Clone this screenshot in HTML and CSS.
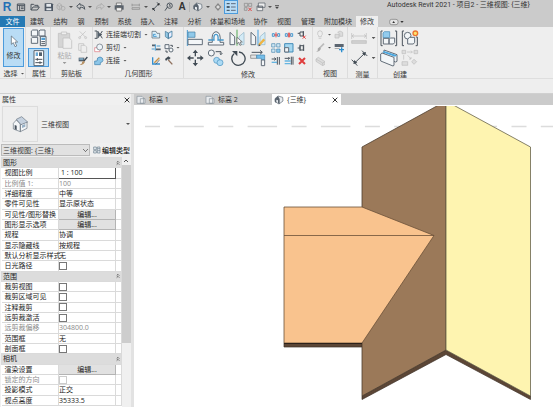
FILE: index.html
```html
<!DOCTYPE html>
<html lang="zh-CN">
<head>
<meta charset="utf-8">
<title>Autodesk Revit 2021</title>
<link rel="stylesheet" href="styles.css">
</head>
<body>
<header class="titlebar">
  <div class="quick">
    <button class="logo" aria-label="Revit">R</button>
    <button aria-label="主页"><svg class="i10" viewBox="45 5 30 30"><path class="dk" d="M49 11h22v20H49zM49 15h22M56 15v16M60 20h8M60 25h8"/></svg></button>
    <button aria-label="打开"><svg class="i10" viewBox="90 5 30 30"><path class="dk" d="M93 29V12h8l3 3h10v5M93 29l6-9h19l-6 9z"/></svg></button>
    <button aria-label="保存"><svg class="i10" viewBox="130 5 30 30"><path fill="#4e5865" d="M132 9h22l3 3v20h-25z"/><path fill="#e4e8ec" d="M137 11h14v8h-14zM137 24h15v6h-15z"/></svg></button>
    <button aria-label="同步"><svg class="i10" viewBox="167 5 30 30"><path class="lt" fill="#c2c2c2" d="M170 14l7-5 7 5v10l-7 5-7-5zM170 14l7 4 7-4M177 18v11"/><circle class="lt" cx="188" cy="24" r="6" fill="#ccc"/></svg></button>
    <i class="dot"></i>
    <button aria-label="放弃"><svg class="i10" viewBox="227 5 30 30"><path class="dk" fill="#eee" d="M229 18l10-9v5h6q9 2 8 13q-3-6-9-6h-5v6z"/></svg></button>
    <i class="dot"></i>
    <button aria-label="重做"><svg class="i10" viewBox="285 5 30 30"><path class="lt" d="M313 18l-10-9v5h-6q-9 2-8 13q3-6 9-6h5v6z"/></svg></button>
    <i class="dot"></i>
    <button aria-label="打印"><svg class="i10" viewBox="342 5 30 30"><path fill="#eee" stroke="#555" stroke-width="2" d="M349 8h16v8h-16z"/><path fill="#59626c" d="M344 15h27v13h-27z"/><path fill="#f4f4f4" stroke="#555" stroke-width="2" d="M349 22h16v10h-16z"/></svg></button>
    <i></i>
    <button aria-label="测量"><svg class="i10" viewBox="393 5 30 30"><path class="md" d="M396 14h22M396 10v8M418 10v8M396 22h23v5h-23z"/></svg></button>
    <i class="dot"></i>
    <button aria-label="对齐尺寸标注"><svg class="i10" viewBox="451 5 30 30"><path class="dk" d="M457 28l18-18M454 23l9 9M469 6l9 9"/><path fill="#333" d="M455 30l3-8 5 5zM477 8l-3 8-5-5z"/></svg></button>
    <button aria-label="标记"><svg class="i10" viewBox="490 5 30 30"><path class="dk" d="M493 31l8-12"/><circle class="dk" cx="507" cy="16" r="8" fill="#ddd"/><path class="dk" d="M505 13h3v7"/></svg></button>
    <button class="letter" aria-label="文字">A</button>
    <i class="bar"></i>
    <button aria-label="三维视图"><svg class="i10" viewBox="25 5 30 30"><path fill="#e9edf1" stroke="#59636e" stroke-width="2" d="M27 16l9-8 15 4 1 11-12 9-13-7z"/><path fill="#59636e" d="M27 16l9-8 6 9v15l-5-2v-9l-6-2v9l-4-2z"/></svg></button>
    <i class="dot"></i>
    <button aria-label="剖面"><svg class="i10" viewBox="82 5 30 30"><path fill="#888" d="M87 20l10-12 10 12-10 12z"/><circle cx="97" cy="20" r="6" fill="#ddd" stroke="#777" stroke-width="2"/></svg></button>
    <button class="on" aria-label="细线"><svg class="i10" viewBox="122 5 30 30"><path stroke="#354553" stroke-width="3" d="M124 10h9M124 30h9"/><path stroke="#354553" stroke-width="5" d="M124 20h9"/><path stroke="#334" stroke-width="2" d="M137 10h14M137 20h14M137 30h14"/></svg></button>
    <i></i>
    <button aria-label="关闭非活动视图"><svg class="i10" viewBox="173 5 30 30"><path class="md" d="M177 9h10v9h-10zM190 9h9v9h-9zM177 22h8v8h-8z"/><path class="rd" d="M189 22l10 10M199 22l-10 10"/></svg></button>
    <button aria-label="切换窗口"><svg class="i10" viewBox="212 5 30 30"><path fill="#eee" stroke="#4b545d" stroke-width="2" d="M219 8h20v13h-20zM215 17h17v14h-17zM215 20h17"/></svg></button>
    <i class="dot"></i>
    <button aria-label="自定义"><svg class="i6" viewBox="0 0 18 18"><path fill="#444" d="M3 4h12v2H3zM3 8h12l-6 7z"/></svg></button>
  </div>
  <h1>Autodesk Revit 2021 - 项目2 - 三维视图: {三维}</h1>
</header>

<nav class="tabs">
  <a class="file" href="#">文件</a><a href="#">建筑</a><a href="#">结构</a><a href="#">钢</a><a href="#">预制</a><a href="#">系统</a><a href="#">插入</a><a href="#">注释</a><a href="#">分析</a><a href="#">体量和场地</a><a href="#">协作</a><a href="#">视图</a><a href="#">管理</a><a href="#">附加模块</a><a class="current" href="#">修改</a>
  <button aria-label="最小化功能区"><svg width="16" height="8" viewBox="65 53 48 24"><rect x="67" y="57" width="25" height="16" rx="6" fill="#e4e4e4" stroke="#777" stroke-width="2"/><path fill="#333" d="M75 68l4-6 4 6zM99 62h10l-5 6z"/></svg></button>
</nav>

<section class="ribbon">
  <div class="group select">
    <div class="body"><button class="modify"><svg class="i12" viewBox="22 94 36 36"><path fill="#fff" stroke="#53606c" stroke-width="2" d="M32 97v25l6-5 5 12 5-2-5-12h8z"/></svg>修改</button></div>
    <p>选择 <i class="dot"></i></p>
  </div>
  <div class="group props">
    <div class="body two">
      <button aria-label="类型属性"><svg class="i18" viewBox="88 86 54 54"><path class="bx" d="M92 92l4-3h15v18H92zM115 92l3-3h15v18h-18zM92 114l3-3h16v18H92z"/><path fill="#fff" stroke="#53606c" stroke-width="3" d="M119 108h17v28h-17z"/><path fill="#53a0d5" d="M122 112h11v7h-11z"/><path class="dk" d="M122 124h11M122 130h11"/></svg></button>
      <button class="on" aria-label="属性"><svg class="i18" viewBox="87 144 54 54"><path fill="#fff" stroke="#53606c" stroke-width="3" d="M99 149h29v45H99z"/><path fill="#68a9d6" d="M104 154h7v11h-7z"/><path fill="#53606c" d="M114 154h9v11h-9z"/><path class="dk" d="M103 175h21M103 185h21M109 171v8M117 181v8"/></svg></button>
    </div>
    <p>属性</p>
  </div>
  <div class="group clip">
    <div class="body">
      <button class="paste"><svg class="i18" viewBox="168 85 54 54"><path fill="#d5d5d5" stroke="#bbb" stroke-width="2" d="M175 92h34v42h-34z"/><path fill="#eee" stroke="#bbb" stroke-width="2" d="M184 88h16v8h-16zM189 106h19l7 7v24h-26z"/></svg>粘贴<i class="dot"></i></button>
      <div class="three">
        <button aria-label="剪切"><svg class="i10" viewBox="237 90 30 30"><path class="gy" d="M242 94l18 18M260 94l-18 18"/><circle class="gy" cx="242" cy="113" r="3"/><circle class="gy" cx="260" cy="113" r="3"/></svg></button>
        <button aria-label="复制"><svg class="i10" viewBox="237 129 30 30"><path class="gy" d="M246 151h-7v-20h15v5M246 136h12l5 5v16h-17z"/></svg></button>
        <button aria-label="匹配类型"><svg class="i10" viewBox="236 169 30 30"><path fill="#53606c" d="M238 174h17v11h-17z"/><path fill="#8cc0e0" d="M240 176h12v4h-12z"/><path stroke="#374450" stroke-width="4" d="M264 172l-11 13"/><path fill="#b79164" d="M253 183l4 4q-6 12-16 8 8-1 7-8z"/></svg></button>
      </div>
    </div>
    <p>剪贴板</p>
  </div>
  <div class="group geom">
    <div class="body">
      <div class="three wide">
        <button><svg class="i10" viewBox="285 89 30 30"><path class="dk" d="M287 92h7v22h-7M296 92l14 22M310 92l-14 22M309 103h-9"/><path fill="#53606c" d="M296 94l8 9-8 9z"/></svg>连接端切割<i class="dot"></i></button>
        <button><svg class="i10" viewBox="285 129 30 30"><path fill="#fff" stroke="#df7780" stroke-width="2" d="M287 143h16v12h-16z"/><circle cx="302" cy="141" r="9" fill="#edf4f9" stroke="#5e6872" stroke-width="2"/></svg>剪切<i class="dot"></i></button>
        <button><svg class="i10" viewBox="285 169 30 30"><path fill="#8dc6e8" stroke="#3b7eac" stroke-width="2" d="M287 184h7q-1-12 9-12 9 1 9 10-1 6-8 7v6h-17z"/></svg>连接<i class="dot"></i></button>
      </div>
      <div class="three">
        <button aria-label="连接屋顶"><svg class="i10" viewBox="451 89 30 30"><path fill="#d9eef9" stroke="#53606c" stroke-width="2" d="M454 93h12l3 6h8v14h-23z"/><path class="bl" d="M465 102h-7v6h10"/></svg></button>
        <button aria-label="梁连接"><svg class="i10" viewBox="451 129 30 30"><path stroke="#53606c" stroke-width="5" d="M454 136h10M466 148h14"/><path class="bl" d="M464 133v19M468 138h11M453 147h9"/></svg></button>
        <button aria-label="拆分面"><svg class="i10" viewBox="451 169 30 30"><path stroke="#368fce" stroke-width="4" fill="none" d="M456 173v20h22"/><path stroke="#c89245" stroke-width="4" d="M461 189l15-15"/><path stroke="#374450" stroke-width="2" d="M465 194l12-14"/></svg></button>
      </div>
      <div class="three last">
        <button aria-label="墙连接"><svg class="i10" viewBox="492 89 30 30"><path fill="#94cae8" stroke="#447392" stroke-width="2" d="M496 93l9 5v17l-9-6zM505 98l11-6v17l-11 6z"/><path fill="#eef" d="M507 100l7-4v10l-7 5z"/></svg></button>
        <button aria-label="连接几何图形"><svg class="i10" viewBox="492 129 30 30"><path class="bx" d="M495 134h12v12h-12z"/><circle class="bx" cx="513" cy="150" r="6"/><path class="dk" d="M511 136h6v5M498 151v5h6"/></svg><i class="dot"></i></button>
        <button aria-label="拆除"><svg class="i10" viewBox="492 169 30 30"><path stroke="#8f715e" stroke-width="4" d="M505 181l12 13"/><path fill="#414b54" d="M495 178l10-8 7 5-5 5-4-1-5 5z"/></svg></button>
      </div>
    </div>
    <p>几何图形</p>
  </div>
  <div class="group edit">
    <div class="body">
      <div class="large">
        <button aria-label="对齐"><svg class="i18" viewBox="4 86 54 54"><path class="bl" d="M8 89v48"/><path fill="#8fc9ea" stroke="#447da2" stroke-width="2" d="M10 95h21v16H10z"/><path class="bx" d="M10 117h43v16H10z"/></svg></button>
        <button aria-label="偏移"><svg class="i18" viewBox="68 86 54 54"><path class="bx" d="M72 134v-8h12q-4-30 11-32 16 2 12 32h11v8z"/><path fill="none" stroke="#4799cc" stroke-width="4" d="M72 119h17q-2-17 6-17t6 17h17"/></svg></button>
        <button aria-label="镜像-拾取轴"><svg class="i18" viewBox="132 86 54 54"><path class="bx" d="M138 96l14 13v24h-14z"/><path fill="#d4ebf6" stroke="#8fb4c6" stroke-width="2" d="M180 96l-15 13v24h15z"/><path stroke="#52a957" stroke-width="3" d="M159 88v48"/><path fill="#fff" stroke="#555" stroke-width="2" d="M159 111v19l5-4 4 9 4-2-4-8h7z"/></svg></button>
        <button aria-label="镜像-绘制轴"><svg class="i18" viewBox="196 86 54 54"><path class="bx" d="M202 96l14 13v24h-14z"/><path fill="#d4ebf6" stroke="#8fb4c6" stroke-width="2" d="M244 96l-15 13v24h15z"/><path stroke="#419dde" stroke-width="3" d="M223 88v48"/><path stroke="#efb443" stroke-width="7" d="M226 134l16-17"/><path fill="#555" d="M224 138l2-7 5 5z"/></svg></button>
        <button aria-label="移动"><svg class="i18" viewBox="4 145 54 54"><path stroke="#414b54" stroke-width="4" d="M15 172h34M32 155v34"/><path fill="#414b54" d="M32 147l8 10H24zM32 197l8-10H24zM7 172l10-8v16zM57 172l-10-8v16z"/><path fill="#eee" d="M27 167h10v10H27z"/></svg></button>
        <button aria-label="复制"><svg class="i18" viewBox="68 145 54 54"><circle class="bx" cx="81" cy="157" r="9"/><path class="dk" d="M94 153h16v8M106 158l4 4 4-4"/><circle cx="97" cy="179" r="9" fill="#acdaf4" stroke="#438ebd" stroke-width="2"/><circle cx="107" cy="186" r="9" fill="#acdaf4" stroke="#438ebd" stroke-width="2"/></svg></button>
        <button aria-label="旋转"><svg class="i18" viewBox="132 145 54 54"><path fill="none" stroke="#414b54" stroke-width="4" d="M150 159a20 20 0 1 0 15-5"/><path fill="#414b54" d="M144 151h16v16z"/></svg></button>
        <button aria-label="修剪"><svg class="i18" viewBox="196 145 54 54"><path class="dk" d="M204 155h31M229 149l7 6-7 6"/><path fill="#e5e5e5" stroke="#777" stroke-width="2" d="M201 163h18v10h-18z"/><path fill="#75bee9" stroke="#4185b4" stroke-width="2" d="M219 163h24v15h-10v-5h-14z"/><path class="bx" d="M233 178h10v17h-10z"/></svg></button>
      </div>
      <div class="nine">
        <button aria-label="拆分图元"><svg class="i10" viewBox="264 89 30 30"><path class="bl" d="M268 100h6v8h-6zM284 100h6v8h-6z"/><path class="rd" d="M279 96v15M274 104h10"/></svg></button>
        <button aria-label="用间隙拆分"><svg class="i10" viewBox="304 89 30 30"><path class="bl" d="M308 100h6v8h-6zM324 100h6v8h-6z"/><path class="rd" d="M317 97v14M321 97v14"/></svg></button>
        <button aria-label="解锁"><svg class="i10" viewBox="345 89 30 30"><path class="dk" d="M347 99h7v-4h10v12h-10v-8M364 92v17"/><path class="rd" d="M362 106l9 9M371 106l-9 9"/></svg></button>
        <button aria-label="阵列"><svg class="i10" viewBox="265 129 30 30"><path fill="#cfe8f5" stroke="#4a88af" stroke-width="2" d="M267 131h10v10h-10zM282 131h10v10h-10zM267 147h10v10h-10z"/><path fill="#8cc9eb" stroke="#4689b5" stroke-width="2" d="M282 147h10v10h-10z"/></svg></button>
        <button aria-label="缩放"><svg class="i10" viewBox="305 129 30 30"><path fill="#a5d7f0" stroke="#438bb7" stroke-width="3" d="M307 131h25v25h-25z"/><path class="bx" d="M307 143h12v13h-12z"/></svg></button>
        <button aria-label="锁定"><svg class="i10" viewBox="345 129 30 30"><path class="dk" d="M347 144h7M354 137h10v13h-10zM365 134v19M354 134v19"/></svg></button>
        <button aria-label="修剪单个"><svg class="i10" viewBox="265 169 30 30"><path class="dk" d="M267 178h12M275 174l5 4-5 4M284 172v23M290 172v23"/><path stroke="#65b5e1" stroke-width="4" d="M267 188h16"/></svg></button>
        <button aria-label="修剪多个"><svg class="i10" viewBox="305 169 30 30"><path class="dk" d="M307 176h14M318 172l4 4-4 4M327 171v24M332 171v24"/><path stroke="#65b5e1" stroke-width="4" d="M307 184h18M307 192h18"/></svg></button>
        <button aria-label="删除"><svg class="i10" viewBox="345 169 30 30"><path stroke="#df3d3d" stroke-width="6" d="M351 175l18 18M369 175l-18 18"/></svg></button>
      </div>
    </div>
    <p>修改</p>
  </div>
  <div class="group view">
    <div class="body">
      <button aria-label="隐藏"><svg class="i10" viewBox="392 89 30 30"><path class="gy" d="M403 109q0-5-3-7-2-10 7-11 9 1 7 11-3 2-3 7zM403 114h8"/></svg></button><i class="dot"></i>
      <button aria-label="替换"><svg class="i10" viewBox="450 89 30 30"><path fill="#ddd" stroke="#bcbcbc" stroke-width="2" d="M453 102h12v11h-12zM461 96l7-4 8 4v12h-9v-8z"/></svg></button>
      <button aria-label="线处理"><svg class="i10" viewBox="392 129 30 30"><path stroke="#bbb" stroke-width="5" d="M419 131l-13 13"/><path fill="#a9a9a9" d="M405 141l5 5q-5 11-15 9 7-2 5-9z"/></svg></button><i class="dot"></i>
      <button aria-label="线样式"><svg class="i10" viewBox="450 129 30 30"><path fill="#5b6570" d="M452 132h27v9h-27z"/><path fill="#aaa" d="M452 144h15v3h-15z"/><path stroke="#2d8ecf" stroke-width="4" d="M473 142v15M465 149h15"/></svg></button>
      <button aria-label="选择框"><svg class="i10" viewBox="392 169 30 30"><path fill="#ddd" stroke="#bcbcbc" stroke-width="2" d="M395 178l7-5 20 13v8l-7 4-20-13zM395 178l20 12v8M415 190l7-4"/></svg></button>
    </div>
    <p>视图</p>
  </div>
  <div class="group measure">
    <div class="body">
      <button aria-label="测量"><svg class="i18" viewBox="496 86 54 54"><path class="gy" d="M501 98v18M545 98v18M502 107h42M508 102l-6 5 6 5M538 102l6 5-6 5"/><path fill="#d2d2d2" stroke="#bbb" stroke-width="2" d="M501 121h44v8h-44z"/></svg></button><i class="dot"></i>
      <button aria-label="对齐标注"><svg class="i18" viewBox="496 145 54 54"><path class="dk" d="M510 187l30-29M501 177l17 18M532 150l16 16"/><path fill="#414b54" d="M506 190l3-12 9 9zM544 154l-3 12-9-9z"/></svg></button><i class="dot"></i>
    </div>
    <p>测量</p>
  </div>
  <div class="group create">
    <div class="body">
      <button aria-label="创建部件"><svg class="i18" viewBox="40 86 54 54"><path class="dk" d="M48 92h-5v44h5M85 92h5v44h-5"/><path fill="#93ccee" stroke="#3f86b3" stroke-width="2" d="M49 98l4-4h16v18H49z"/><path class="bx" d="M50 114h17v17H50zM67 117l5-4h12v14l-4 4H67z"/></svg></button>
      <button aria-label="创建组"><svg class="i18" viewBox="101 86 54 54"><path class="dk" d="M110 92h-5v44h5M146 110h4v26h-5"/><circle class="bx" cx="121" cy="106" r="10"/><path class="bx" d="M121 116l6-5h15v15l-4 5h-17z"/><circle cx="144" cy="99" r="7" fill="#ffe36b" stroke="#eb7532" stroke-width="4"/></svg></button>
      <button aria-label="创建零件"><svg class="i18" viewBox="39 145 54 54"><path class="bx" d="M51 148l39 14v20l-4 2-35-14z"/><path fill="#4ba7df" d="M46 155l38 13 6-4-39-13z"/><path class="bx" d="M41 160l4-3 36 13v24l-3 2-37-15z"/></svg></button>
      <button aria-label="创建组合"><svg class="i18" viewBox="101 145 54 54"><path fill="#ddd" stroke="#bcbcbc" stroke-width="2" d="M104 149h11v10h-11zM140 149h11v10h-11zM104 183h17v11h-17zM140 176l8 7-8 8-7-8z"/><path class="gy" d="M119 154h16M131 150l4 4-4 4M109 163v14M121 164l10 11v-6M131 175h-6"/></svg></button>
    </div>
    <p>创建</p>
  </div>
</section>

<main class="work">
  <aside class="panel">
    <div class="panel-head"><h2>属性</h2><button aria-label="关闭"><svg class="i6" viewBox="0 0 18 18"><path stroke="#333" stroke-width="3" d="M2 2l14 14M16 2L2 16"/></svg></button></div>
    <button class="type">
      <span class="thumb"><svg class="i18" viewBox="33 80 54 54"><path fill="#f3f5f7" stroke="#67727e" stroke-width="2" d="M40 105l9-10 12 12v23l-21-8zM61 108l20-8v20l-20 10z"/><path fill="#c5d1df" stroke="#67727e" stroke-width="2" d="M49 93l16-8 18 16-20 8z"/><path fill="#46515d" d="M44 110l6 2v13l-6-2z"/><path fill="#97b0c6" d="M66 111l10-4v8l-10 4z"/></svg></span>
      <span>三维视图</span><i class="dot"></i>
    </button>
    <div class="instance">
      <select aria-label="视图实例"><option>三维视图: {三维}</option></select>
      <button><svg class="i8" viewBox="0 0 24 24"><path fill="#e8eef3" stroke="#687b8b" stroke-width="2" d="M2 3h8v8H2zM13 3h8v18h-8zM2 14h8v7H2zM14 8h7M14 14h7"/></svg>编辑类型</button>
    </div>
    <div class="list">
      <table>
        <colgroup><col class="c-name"><col><col class="c-end"></colgroup>
        <tbody>
        <tr><th colspan="3"><div>图形<svg class="i6" viewBox="0 0 18 18"><path class="fold" d="M5 8l4-4 4 4M5 14l4-4 4 4"/></svg></div></th></tr>
        <tr><td><label for="scale">视图比例</label></td><td class="framed"><input id="scale" type="text" value="1 : 100"></td><td></td></tr>
        <tr class="off"><td>比例值 1:</td><td>100</td><td></td></tr>
        <tr><td>详细程度</td><td>中等</td><td></td></tr>
        <tr><td>零件可见性</td><td>显示原状态</td><td></td></tr>
        <tr><td>可见性/图形替换</td><td class="act"><button>编辑...</button></td><td></td></tr>
        <tr><td>图形显示选项</td><td class="act"><button>编辑...</button></td><td></td></tr>
        <tr><td>规程</td><td>协调</td><td></td></tr>
        <tr><td>显示隐藏线</td><td>按规程</td><td></td></tr>
        <tr><td>默认分析显示样式</td><td>无</td><td></td></tr>
        <tr><td><label for="sun">日光路径</label></td><td><input id="sun" type="checkbox"></td><td></td></tr>
        <tr><th colspan="3"><div>范围<svg class="i6" viewBox="0 0 18 18"><path class="fold" d="M5 8l4-4 4 4M5 14l4-4 4 4"/></svg></div></th></tr>
        <tr><td><label for="crop">裁剪视图</label></td><td><input id="crop" type="checkbox"></td><td></td></tr>
        <tr><td><label for="cropv">裁剪区域可见</label></td><td><input id="cropv" type="checkbox"></td><td></td></tr>
        <tr><td><label for="anno">注释裁剪</label></td><td><input id="anno" type="checkbox"></td><td></td></tr>
        <tr><td><label for="far">远剪裁激活</label></td><td><input id="far" type="checkbox"></td><td></td></tr>
        <tr class="off"><td>远剪裁偏移</td><td>304800.0</td><td></td></tr>
        <tr><td>范围框</td><td>无</td><td></td></tr>
        <tr><td><label for="sect">剖面框</label></td><td><input id="sect" type="checkbox"></td><td></td></tr>
        <tr><th colspan="3"><div>相机<svg class="i6" viewBox="0 0 18 18"><path class="fold" d="M5 8l4-4 4 4M5 14l4-4 4 4"/></svg></div></th></tr>
        <tr><td>渲染设置</td><td class="act"><button>编辑...</button></td><td></td></tr>
        <tr class="off"><td><label for="lock">锁定的方向</label></td><td><input id="lock" type="checkbox" disabled></td><td></td></tr>
        <tr><td>投影模式</td><td>正交</td><td></td></tr>
        <tr><td>视点高度</td><td>35333.5</td><td></td></tr>
        </tbody>
      </table>
      <div class="scroll"><svg class="i8" viewBox="0 0 24 24"><path fill="none" stroke="#555" stroke-width="3" d="M6 15l6-6 6 6"/></svg><div class="grip"></div></div>
    </div>
  </aside>

  <section class="stage">
    <nav class="docs">
      <a href="#"><svg class="i10" viewBox="16 20 30 30"><path fill="#e8ebee" stroke="#88929c" stroke-width="2" d="M19 24h15l5 5v16H19zM29 31h14v14H29z"/></svg>标高 1</a>
      <a href="#"><svg class="i10" viewBox="16 20 30 30"><path fill="#e8ebee" stroke="#88929c" stroke-width="2" d="M19 24h15l5 5v16H19zM29 31h14v14H29z"/></svg>标高 2</a>
      <a class="current" href="#"><svg class="i10" viewBox="25 5 30 30"><path fill="#e9edf1" stroke="#59636e" stroke-width="2" d="M28 16l9-8 14 4 1 11-12 9-12-7z"/><path fill="#59636e" d="M28 16l9-8 5 9v15l-5-2v-9l-5-2v9l-4-2z"/></svg>{三维}<svg class="i6 x" viewBox="0 0 18 18"><path stroke="#333" stroke-width="3" d="M2 2l14 14M16 2L2 16"/></svg></a>
    </nav>
    <svg class="model" viewBox="134 105 419 302" role="img" aria-label="三维模型">
      <path stroke="#dcdcdc" stroke-width="1.500" stroke-dasharray="15 14.3 29.5 14.5" d="M145 126.500H553"/>
      <path fill="#5c4636" stroke="#3d3027" stroke-width=".7" d="M362 396l84-46 84.500 46v3.500L446 354.500 362 399.500zM284 343h78v4h-78z"/>
      <path fill="#9b7959" stroke="#4d3d2f" stroke-width=".8" d="M362 147l84-46v249l-84 46z"/>
      <path fill="#fef4b0" stroke="#67624a" stroke-width=".8" d="M446 101l84.500 46v249L446 350z"/>
      <path fill="#f9c38e" stroke="#6b5038" stroke-width=".8" d="M284 207h78l72 28.500L362 343h-78zM284 235.500h150"/>
      <path stroke="#2c211a" d="M284 343.500h78"/>
      <path fill="#fff" d="M134 105h419v1H134z"/>
    </svg>
  </section>
</main>
</body>
</html>
```
FILE: styles.css
```css
* { box-sizing: border-box; }

body {
  margin: 0;
  min-height: 100vh;
  display: flex;
  flex-direction: column;
  background: #eee;
  color: #333;
  font: 7px/9px "Open Sans", "Noto Sans CJK SC", sans-serif;
}

h1, h2, p { margin: 0; font: inherit; }
a { color: inherit; text-decoration: none; }

button {
  margin: 0;
  padding: 0;
  border: 0;
  background: none;
  color: inherit;
  font: inherit;
  display: flex;
  align-items: center;
  justify-content: center;
}

svg { display: block; flex: none; }
.i6 { width: 6px; height: 6px; }
.i8 { width: 8px; height: 8px; }
.i10 { width: 10px; height: 10px; }
.i12 { width: 12px; height: 12px; }
.i18 { width: 18px; height: 18px; }

.dk { fill: none; stroke: #4b545d; stroke-width: 3; }
.md { fill: none; stroke: #858585; stroke-width: 2; }
.lt { stroke: #a4a4a4; stroke-width: 2; fill: none; }
.gy { fill: none; stroke: #bcbcbc; stroke-width: 2; }
.bl { fill: none; stroke: #479bd0; stroke-width: 3; }
.rd { fill: none; stroke: #df4848; stroke-width: 3; }
.bx { fill: #f3f6f8; stroke: #626d78; stroke-width: 3; }
.fold { fill: none; stroke: #333; stroke-width: 2; }

.dot {
  justify-self: center;
  align-self: center;
  flex: none;
  width: 4px;
  height: 2px;
  background: #555;
  clip-path: polygon(0 0, 100% 0, 50% 100%);
}

/* title bar */
.titlebar {
  display: flex;
  justify-content: space-between;
  height: 16px;
  background: #cbcbcb;
}

.quick {
  display: grid;
  grid-template-columns:
    14px 13px 16px 11px 14px 6px 13px 6px 13px 6px 14px 3px 14px 6px 13px 13px
    14px 2px 14px 6px 13px 14px 3px 14px 12px 6px 8px;
  height: 14px;
}

.logo { color: #2370b5; font: bold 12px/14px "Liberation Sans", sans-serif; }
.letter { font: bold 10px/14px "Liberation Sans", sans-serif; }
.bar { width: 1px; height: 10px; background: #b5b5b5; align-self: center; }
.on { background: #b9dcf5; border: 1px solid #4c9bdc; }
.titlebar h1 {
  margin-right: 23px;
  font: 7px/11px Roboto, "Noto Sans CJK SC", sans-serif;
  white-space: nowrap;
}

/* ribbon tabs */
.tabs {
  display: grid;
  grid-template-columns:
    25px 24px 23px 18px 23px 23px 23px 24px 23px 43px 23px 24px 24px 36px 22px 38px;
  height: 11px;
  background: #cbcbcb;
  line-height: 11px;
  text-align: center;
  white-space: nowrap;
}

.tabs .file { background: #2479b4; color: #fff; }
.tabs .current { background: #eee; }

/* ribbon */
.ribbon {
  display: flex;
  height: 52px;
  border-bottom: 1px solid #dedede;
}

.group {
  display: flex;
  flex-direction: column;
  border-right: 1px solid #dcdcdc;
  padding-top: 1px;
}

.group p {
  display: flex;
  justify-content: center;
  gap: 3px;
  padding-top: 1px;
  line-height: 11px;
}

.body { display: flex; height: 40px; }
.three { display: grid; grid-template-rows: repeat(3, 13px); }

.select { width: 26px; padding-left: 3px; }
.modify {
  flex-direction: column;
  gap: 4px;
  width: 21px;
  height: 39px;
  background: #b9dcf5;
  border: 1px solid #4c9bdc;
}
.props { width: 25px; padding-left: 2px; }
.two { flex-direction: column; gap: 1px; width: 21px; }
.two button { height: 19px; }
.clip { width: 42px; }
.paste { flex-direction: column; width: 27px; gap: 2px; color: #aaa; }
.paste .dot { background: #999; }
.geom { width: 91px; padding-left: 1px; }
.wide { width: 56px; }
.wide button { justify-content: flex-start; gap: 2px; }
.wide .dot { margin-left: 1px; }
.geom .three + .three { width: 12px; }
.geom .last button { justify-content: flex-start; gap: 2px; padding-left: 2px; }
.edit { width: 129px; }
.large { display: grid; grid-template: repeat(2, 20px) / repeat(4, 21px); }
.nine { display: grid; grid-template: repeat(3, 13px) / repeat(3, 13px); margin-left: 1px; }
.view { width: 35px; }
.view .body { display: grid; grid-template: repeat(3, 13px) / 14px 5px 13px; }
.measure { width: 30px; }
.measure .body { display: grid; grid-template: repeat(2, 20px) / 22px 7px; }
.create { width: 44px; border-right: 0; }
.create .body { display: grid; grid-template: repeat(2, 20px) / repeat(2, 21px); }

/* work area */
.work {
  flex: 1;
  display: flex;
  margin-top: 14px;
  border-top: 1px solid #d0d0d0;
}

.panel {
  flex: none;
  display: flex;
  flex-direction: column;
  width: 134px;
  padding-left: 1px;
  border-right: 3px solid #e2e2e2;
  background: #f0f0f0;
}

.panel-head {
  display: flex;
  justify-content: space-between;
  padding: 0 1px;
  height: 11px;
  line-height: 11px;
}

.type { justify-content: flex-start; gap: 3px; height: 38px; padding: 0 1px; background: #eee; }
.type .dot { margin-left: auto; }
.thumb {
  display: flex;
  align-items: center;
  justify-content: center;
  width: 36px;
  height: 36px;
  border: 1px solid #dcdcdc;
}

.instance { display: flex; gap: 2px; height: 12px; margin: 1px 0; }
.instance select {
  appearance: none;
  width: 89px;
  padding: 0 1px;
  border: 1px solid #bbb;
  border-radius: 0;
  color: inherit;
  font: inherit;
  background:
    linear-gradient(45deg, transparent 40%, #777 40%, #777 60%, transparent 60%) 81px 4px / 3px 3px no-repeat,
    linear-gradient(-45deg, transparent 40%, #777 40%, #777 60%, transparent 60%) 83px 4px / 3px 3px no-repeat,
    #e1e1e1;
  background:
    linear-gradient(-135deg, transparent 40%, #777 40%, #777 60%, transparent 60%) 81px 4px / 3px 3px no-repeat,
    linear-gradient(135deg, transparent 40%, #777 40%, #777 60%, transparent 60%) 83px 4px / 3px 3px no-repeat,
    #e1e1e1;
}
.instance button { flex: 1; gap: 1px; color: #111; font-weight: 500; }

.list { flex: 1; display: flex; background: #fff; }
table {
  flex: 1;
  width: 121px;
  height: 249px;
  border-collapse: collapse;
  table-layout: fixed;
  color: #222;
}
.c-name { width: 57px; }
.c-end { width: 6px; }
td, th {
  padding: 0;
  border: 1px solid #dadada;
  line-height: 9px;
  text-align: left;
  white-space: nowrap;
  font-weight: normal;
}
th { background: #dcdcdc; padding-left: 1px; }
th div { display: flex; justify-content: space-between; align-items: center; }
td:first-child { padding-left: 3px; border-left: 0; }
.off { color: #8a8a8a; }
label { display: block; }
.framed { border: 1px solid #555; }
input[type="text"] {
  display: block;
  width: 100%;
  height: 9px;
  padding: 0 2px;
  border: 0;
  background: none;
  color: inherit;
  font: inherit;
}
input[type="checkbox"] {
  appearance: none;
  display: block;
  width: 8px;
  height: 8px;
  margin: 0;
  border: 1px solid #777;
  background: #fff;
}
input[type="checkbox"]:disabled { border-color: #ccc; }
td.act { border-color: #b4b4b4; background: #e1e1e1; }
.act button { width: 100%; height: 9px; }

.scroll {
  flex: none;
  width: 9px;
  background: #f0f0f0;
}
.grip { height: 71%; background: #cdcdcd; }

/* drawing area */
.stage { flex: 1; background: #fff; }
.docs { display: flex; height: 11px; background: #cbcbcb; line-height: 11px; }
.docs a { display: flex; align-items: center; gap: 3px; width: 69px; padding: 0 3px 0 2px; }
.docs .current { background: #fff; }
.x { margin-left: auto; }
.model { width: 100%; height: auto; }
```
